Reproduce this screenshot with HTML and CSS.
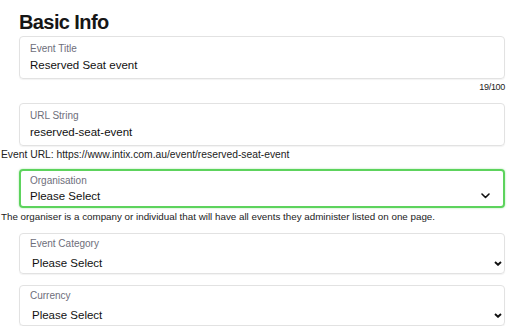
FILE: index.html
```html
<!DOCTYPE html>
<html lang="en">

<head>
    <meta charset="UTF-8">
    <meta name="viewport" content="width=device-width, initial-scale=1.0">
    <title>Basic Info</title>
    <link rel="stylesheet" href="styles.css">
</head>

<body>
    <div class="page">
        <h1 class="title">Basic Info</h1>

        <div class="field">
            <div class="field-label">Event Title</div>
            <div class="field-value">Reserved Seat event</div>
        </div>
        <div class="counter">19/100</div>

        <div class="field field-url">
            <div class="field-label">URL String</div>
            <div class="field-value">reserved-seat-event</div>
        </div>
        <p class="hint hint-url">Event URL: https://www.intix.com.au/event/reserved-seat-event</p>

        <div class="field field-focus">
            <div class="field-label">Organisation</div>
            <div class="select-row">
                <span class="field-value">Please Select</span>
                <svg class="chevron" width="9" height="6" viewBox="0 0 9 6">
                    <polyline points="1,1 4.5,4.5 8,1" fill="none" stroke="#111" stroke-width="1.6" stroke-linecap="round" stroke-linejoin="round"/>
                </svg>
            </div>
        </div>
        <p class="hint hint-org">The organiser is a company or individual that will have all events they administer listed on one page.</p>

        <div class="field field-select">
            <div class="field-label">Event Category</div>
            <div class="select-row">
                <span class="field-value">Please Select</span>
                <svg class="chevron-small" width="8" height="5" viewBox="0 0 8 5">
                    <polyline points="1,1 4,3.8 7,1" fill="none" stroke="#111" stroke-width="1.9" stroke-linejoin="miter"/>
                </svg>
            </div>
        </div>

        <div class="field field-select field-last">
            <div class="field-label">Currency</div>
            <div class="select-row">
                <span class="field-value">Please Select</span>
                <svg class="chevron-small" width="8" height="5" viewBox="0 0 8 5">
                    <polyline points="1,1 4,3.8 7,1" fill="none" stroke="#111" stroke-width="1.9" stroke-linejoin="miter"/>
                </svg>
            </div>
        </div>
    </div>
</body>

</html>
```

FILE: styles.css
```css
body {
    margin: 0;
    background: white;
    font-family: 'Liberation Sans', Arial, Helvetica, sans-serif;
    color: #111;
}

.page {
    padding: 0 10px 0 1px;
}

.title {
    margin: 9px 0 0 18px;
    font-size: 20px;
    line-height: 26px;
    font-weight: bold;
    letter-spacing: -0.6px;
    color: #161616;
}

.field {
    margin: 1px 0 0 18px;
    padding: 5px 10px 5px 10px;
    border: 1px solid #e2e2e2;
    border-radius: 4px;
    box-shadow: 0 1px 1px rgba(0, 0, 0, 0.05);
}

.field-label {
    font-size: 10px;
    line-height: 13px;
    color: #6e6e7a;
}

.field-value {
    display: block;
    margin-top: 2px;
    font-size: 11.5px;
    line-height: 16px;
    color: #111;
}

.counter {
    margin-top: 2px;
    text-align: right;
    font-size: 9px;
    line-height: 12px;
    letter-spacing: -0.3px;
    color: #222;
}

.field-url {
    margin-top: 10px;
}

.hint {
    margin: 3px 0 0 0;
    font-size: 9.8px;
    line-height: 12px;
    color: #222;
}

.hint-url {
    font-size: 10.3px;
}

.field-focus {
    margin-top: 8px;
    padding: 3px 13px 2px 9px;
    border: 2px solid #5dd35d;
    box-shadow: 0 0 2px rgba(93, 211, 93, 0.6);
}

.field-focus .field-value {
    margin-top: 1px;
}

.select-row {
    display: flex;
    align-items: center;
    justify-content: space-between;
}

.select-row .field-value {
    flex: 1;
}

.hint-org {
    margin-bottom: 10px;
}

.field-select {
    padding: 3px 2px 2px 10px;
}

.field-select .field-value {
    margin-top: 5px;
    padding-left: 2px;
}

.field-select + .field-select {
    margin-top: 11px;
}

.chevron {
    display: block;
    margin-top: 1px;
}

.chevron-small {
    display: block;
    margin-top: 5px;
}
```
